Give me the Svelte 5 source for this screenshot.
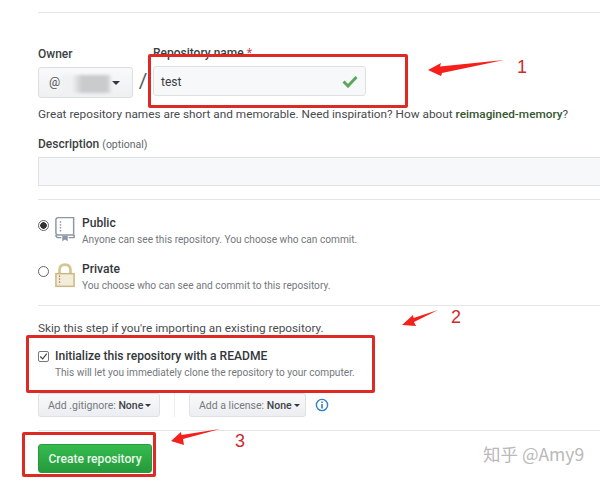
<script>
  const repoOptions = [
    { name: 'Public', note: 'Anyone can see this repository. You choose who can commit.', checked: true },
    { name: 'Private', note: 'You choose who can see and commit to this repository.', checked: false }
  ];
</script>

<div class="page">
  <main class="form">
    <hr class="top" />

    <div class="name-row">
      <div class="owner">
        <div class="label">Owner</div>
        <div class="select">
          <span class="at">@</span>
          <span class="blur"></span>
          <span class="caret"></span>
        </div>
      </div>
      <span class="slash">/</span>
      <div class="repo">
        <div class="label">Repository name <span class="req">*</span></div>
        <div class="input">
          <span class="value">test</span>
          <svg width="16" height="14" viewBox="0 0 16 14">
            <path d="M1.5 7.5 L6 12 L14.5 3" fill="none" stroke="#5da75c" stroke-width="3" />
          </svg>
        </div>
      </div>
    </div>

    <p class="hint">Great repository names are short and memorable. Need inspiration? How about <b>reimagined-memory</b>?</p>

    <div class="label desc">Description <small>(optional)</small></div>
    <div class="desc-input"></div>
    <hr class="after-desc" />

    {#each repoOptions as opt}
      <div class="option">
        <span class="radio" class:on={opt.checked}></span>
        {#if opt.checked}
          <svg class="opt-icon" width="20" height="26" viewBox="0 0 22 27">
            <path d="M3.5 1 H20.5 V20 H3.5 C2 20 1 19 1 17.5 V3.5 C1 2 2 1 3.5 1 Z" fill="#fff" stroke="#8a97a5" stroke-width="1.6" />
            <path d="M1 20 C1 22 2 23 4 23 H7 M15 23 H21 V20" fill="none" stroke="#8a97a5" stroke-width="1.6" />
            <path d="M8 21 H14 V27 L11 25 L8 27 Z" fill="#8a97a5" />
            <path d="M6 5 V18" stroke="#8a97a5" stroke-width="1.6" stroke-dasharray="1.6 1.6" />
          </svg>
        {:else}
          <svg class="opt-icon" width="20" height="26" viewBox="0 0 22 27">
            <path d="M5 12 V8 C5 4 7.5 2 11 2 C14.5 2 17 4 17 8 V12" fill="none" stroke="#d8c594" stroke-width="3" />
            <rect x="1" y="12" width="20" height="14" fill="#f3ecd8" stroke="#c9b682" stroke-width="1.6" />
            <path d="M5 14 V24" stroke="#9a8c66" stroke-width="1.4" stroke-dasharray="1.6 1.6" />
          </svg>
        {/if}
        <div class="opt-text">
          <div class="opt-name">{opt.name}</div>
          <div class="note">{opt.note}</div>
        </div>
      </div>
    {/each}

    <hr class="after-options" />

    <p class="skip">Skip this step if you're importing an existing repository.</p>

    <div class="readme">
      <span class="check">
        <svg width="11" height="11" viewBox="0 0 11 11">
          <path d="M1.5 5.5 L4.5 8.5 L9.5 2" fill="none" stroke="#444" stroke-width="1.4" />
        </svg>
      </span>
      <div>
        <div class="readme-title">Initialize this repository with a README</div>
        <div class="note">This will let you immediately clone the repository to your computer.</div>
      </div>
    </div>

    <div class="add-row">
      <span class="btn gitignore">Add .gitignore: <b>None</b><span class="caret small"></span></span>
      <span class="divider"></span>
      <span class="btn license">Add a license: <b>None</b><span class="caret small"></span></span>
      <svg class="info" width="14" height="14" viewBox="0 0 14 14">
        <circle cx="7" cy="7" r="5.6" fill="none" stroke="#2f7fc4" stroke-width="1.4" />
        <path d="M7 6 V10.4 M7 3.4 V5" stroke="#2f7fc4" stroke-width="1.6" />
      </svg>
    </div>

    <hr class="before-create" />

    <span class="create">Create repository</span>
  </main>

  <!-- annotations drawn over the screenshot -->
  <div class="box box1"></div>
  <div class="box box2"></div>
  <div class="box box3"></div>

  <svg class="arrows" width="600" height="482" viewBox="0 0 600 482">
    <path d="M428 70 L441 63 L440 66.500 L504 60 L442 73 L441 76 Z" fill="#f5201c" />
    <path d="M402 325 L413 315 L413.500 318 L438 310 L414 322 L416 326 Z" fill="#f5201c" />
    <path d="M171 441 L181 432 L181.500 435 L220 429 L183 439 L184 445 Z" fill="#f5201c" />
  </svg>

  <span class="num n1">1</span>
  <span class="num n2">2</span>
  <span class="num n3">3</span>

  <span class="mark">知乎 @Amy9</span>
</div>

<style>
  :global(body) {
    margin: 0;
    background: #fff;
  }

  .page {
    position: relative;
    width: 600px;
    height: 482px;
    overflow: hidden;
    font-family: Roboto, "Open Sans", sans-serif;
    font-size: 11.8px;
    color: #3a3d40;
  }

  .form {
    padding: 12px 0 0 38px;
  }

  hr {
    height: 1px;
    margin: 0;
    border: 0;
    background: #e4e5e7;
  }

  .top {
    margin-bottom: 32px;
  }

  .label {
    font-weight: 500;
    font-size: 12px;
    line-height: 16px;
    color: #3c3f42;
  }

  .req {
    color: #c9525c;
  }

  .name-row {
    display: flex;
    align-items: flex-end;
  }

  .owner {
    width: 95px;
  }

  .select {
    display: flex;
    align-items: center;
    height: 29px;
    margin-top: 5px;
    padding-left: 10px;
    border: 1px solid #dcdee1;
    border-radius: 3px;
    background: linear-gradient(#f8f9fa, #eef0f2);
  }

  .at {
    margin-top: -3px;
    font-size: 12.5px;
    color: #555;
  }

  .blur {
    width: 50px;
    height: 18px;
    margin: 2px 0 0 1px;
    background: linear-gradient(90deg, #f0f1f3 0 22%, #c9cbcd 42% 92%, #e6e8ea);
    filter: blur(1.5px);
  }

  .caret {
    width: 0;
    height: 0;
    margin-left: 1px;
    border: 4px solid transparent;
    border-top-color: #33363a;
    border-bottom: 0;
  }

  .slash {
    width: 20px;
    margin-bottom: 2px;
    text-align: center;
    font-size: 21px;
    line-height: 29px;
    color: #5a5d60;
  }

  .repo {
    width: 213px;
  }

  .input {
    display: flex;
    align-items: center;
    justify-content: space-between;
    height: 28px;
    margin: 5px 0 2px;
    padding: 0 7px 0 7px;
    border: 1px solid #dfe1e4;
    border-radius: 3px;
    background: #f6f8fa;
    font-size: 12px;
  }

  .value {
    padding-top: 2px;
  }

  .hint {
    margin: 7px 0 0;
    line-height: 18px;
    color: #484b4e;
    white-space: nowrap;
  }

  .hint b {
    font-weight: 500;
    color: #35552f;
  }

  .desc {
    margin-top: 13px;
  }

  .desc small {
    font-size: 10.5px;
    font-weight: 400;
    color: #63676b;
  }

  .desc-input {
    height: 27px;
    margin-top: 4px;
    border: 1px solid #dfe1e4;
    border-right: 0;
    background: #f6f8fa;
  }

  .after-desc {
    margin: 13px 0 16px;
  }

  .option {
    display: flex;
    align-items: flex-start;
    height: 46px;
  }

  .radio {
    box-sizing: border-box;
    flex: none;
    width: 11px;
    height: 11px;
    margin: 4px 6px 0 0;
    border: 1px solid #666;
    border-radius: 50%;
    background: #fff;
  }

  .radio.on {
    background: radial-gradient(circle, #333 0 3px, #fff 3.5px);
  }

  .opt-icon {
    flex: none;
    margin-right: 7px;
  }

  .opt-text {
    margin-top: -1px;
  }

  .opt-name,
  .readme-title {
    font-weight: 500;
    font-size: 12.1px;
    line-height: 16px;
    color: #34373a;
  }

  .note {
    margin-top: 1px;
    font-size: 10.15px;
    line-height: 15px;
    color: #74787c;
    white-space: nowrap;
  }

  .after-options {
    margin-top: -3px;
  }

  .skip {
    margin: 14px 0 0;
    line-height: 17px;
    color: #4a4d50;
  }

  .readme {
    display: flex;
    margin-top: 11px;
  }

  .check {
    box-sizing: border-box;
    display: flex;
    align-items: center;
    justify-content: center;
    flex: none;
    width: 11px;
    height: 11px;
    margin: 3px 6px 0 0;
    border: 1px solid #777;
    border-radius: 2px;
  }

  .add-row {
    display: flex;
    align-items: center;
    margin-top: 13px;
    height: 24px;
  }

  .btn {
    box-sizing: border-box;
    display: flex;
    align-items: center;
    height: 24px;
    padding-left: 9px;
    border: 1px solid #dfe1e4;
    border-radius: 3px;
    background: linear-gradient(#f8f9fa, #eceef1);
    font-size: 10.5px;
    color: #75797d;
    white-space: pre;
  }

  .btn b {
    font-weight: 500;
    color: #3f4245;
  }

  .caret.small {
    border-width: 3.500px;
    border-bottom: 0;
    margin-left: 2px;
  }

  .gitignore {
    width: 122px;
  }

  .divider {
    width: 1px;
    height: 24px;
    margin: 0 14px;
    background: #eceef0;
  }

  .license {
    width: 117px;
  }

  .info {
    margin-left: 9px;
  }

  .before-create {
    margin: 13px 0 13px;
  }

  .create {
    box-sizing: border-box;
    display: flex;
    align-items: center;
    justify-content: center;
    width: 114px;
    height: 29px;
    border-radius: 3px;
    background: linear-gradient(#35bb4f, #259a3c);
    border: 1px solid #2a9a41;
    font-size: 12.1px;
    font-weight: 500;
    color: #e9f6ea;
  }

  .box {
    position: absolute;
    box-sizing: border-box;
    border: 3px solid #dd2a25;
    border-radius: 2px;
  }

  .box1 {
    left: 148px;
    top: 54px;
    width: 260px;
    height: 54px;
  }

  .box2 {
    left: 26px;
    top: 335px;
    width: 349px;
    height: 58px;
  }

  .box3 {
    left: 22px;
    top: 432px;
    width: 134px;
    height: 45px;
  }

  .arrows {
    position: absolute;
    left: 0;
    top: 0;
  }

  .num {
    position: absolute;
    font-family: "Liberation Sans", sans-serif;
    font-size: 18px;
    line-height: 20px;
    color: #cc2b2b;
  }

  .n1 {
    left: 517px;
    top: 57px;
  }

  .n2 {
    left: 451px;
    top: 307px;
  }

  .n3 {
    left: 235px;
    top: 431px;
  }

  .mark {
    position: absolute;
    left: 483px;
    top: 443px;
    font-family: "Noto Sans CJK SC", "Liberation Sans", sans-serif;
    font-size: 17.500px;
    line-height: 22px;
    color: #b9b9b9;
    white-space: nowrap;
  }
</style>
